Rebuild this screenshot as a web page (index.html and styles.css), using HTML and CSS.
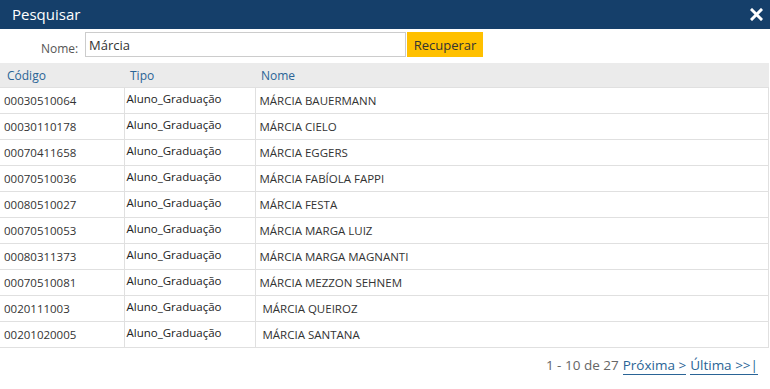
FILE: index.html
```html
<!DOCTYPE html>
<html lang="pt-BR">
<head>
    <meta charset="UTF-8">
    <title>Pesquisar</title>
    <link rel="stylesheet" href="styles.css">
</head>
<body>
    <div class="dialog">
        <div class="titlebar">
            <span class="title">Pesquisar</span>
            <span class="close">
                <svg width="13" height="13" viewBox="0 0 13 13"><path d="M2 2 L11 11 M11 2 L2 11" stroke="#fff" stroke-width="3" stroke-linecap="square"/></svg>
            </span>
        </div>

        <div class="search-row">
            <label for="nome">Nome:</label>
            <input type="text" id="nome" value="Márcia">
            <button>Recuperar</button>
        </div>

        <table class="results">
            <thead>
                <tr><th class="c-code">Código</th><th class="c-type">Tipo</th><th>Nome</th></tr>
            </thead>
            <tbody>
                <tr><td>00030510064</td><td class="type">Aluno_Graduação</td><td>MÁRCIA BAUERMANN</td></tr>
                <tr><td>00030110178</td><td class="type">Aluno_Graduação</td><td>MÁRCIA CIELO</td></tr>
                <tr><td>00070411658</td><td class="type">Aluno_Graduação</td><td>MÁRCIA EGGERS</td></tr>
                <tr><td>00070510036</td><td class="type">Aluno_Graduação</td><td>MÁRCIA FABÍOLA FAPPI</td></tr>
                <tr><td>00080510027</td><td class="type">Aluno_Graduação</td><td>MÁRCIA FESTA</td></tr>
                <tr><td>00070510053</td><td class="type">Aluno_Graduação</td><td>MÁRCIA MARGA LUIZ</td></tr>
                <tr><td>00080311373</td><td class="type">Aluno_Graduação</td><td>MÁRCIA MARGA MAGNANTI</td></tr>
                <tr><td>00070510081</td><td class="type">Aluno_Graduação</td><td>MÁRCIA MEZZON SEHNEM</td></tr>
                <tr><td>0020111003</td><td class="type">Aluno_Graduação</td><td class="pad">MÁRCIA QUEIROZ</td></tr>
                <tr><td>00201020005</td><td class="type">Aluno_Graduação</td><td class="pad">MÁRCIA SANTANA</td></tr>
            </tbody>
        </table>

        <div class="pager">
            <span class="count">1 - 10 de 27</span>
            <a href="#">Próxima &gt;</a>
            <a href="#">Última &gt;&gt;|</a>
        </div>
    </div>
</body>
</html>
```

FILE: styles.css
```css
body {
    margin: 0;
    font-family: "Open Sans", sans-serif;
    background: #fff;
    color: #333;
}
.dialog {
    width: 770px;
}
.titlebar {
    height: 29px;
    background: #153f6a;
    display: flex;
    align-items: center;
    justify-content: space-between;
    padding: 0 7px 0 12px;
}
.title {
    color: #fff;
    font-size: 15px;
    margin-top: -1px;
}
.close {
    display: flex;
    margin-top: -1px;
}
.search-row {
    display: flex;
    align-items: center;
    height: 25px;
    margin-top: 3px;
    padding-left: 41px;
}
.search-row label {
    font-size: 12px;
    color: #555;
    margin-top: 8px;
    width: 44px;
}
.search-row input {
    width: 321px;
    height: 25px;
    box-sizing: border-box;
    border: 1px solid #ccc;
    padding: 0 3px;
    font-family: "Open Sans", sans-serif;
    font-size: 13px;
    color: #333;
    outline: none;
}
.search-row button {
    margin-left: 1px;
    width: 76px;
    height: 25px;
    border: none;
    background: #ffc000;
    font-family: "Open Sans", sans-serif;
    font-size: 13px;
    color: #333;
    padding: 0;
}
.results {
    width: 769px;
    margin-top: 6px;
    border-collapse: collapse;
    font-size: 11.5px;
}
.results th {
    background: #ebebeb;
    color: #2a6496;
    font-weight: normal;
    text-align: left;
    height: 24px;
    padding: 0 6px;
    font-size: 12px;
}
.results th.c-code {
    width: 112px;
    padding-left: 7px;
    padding-right: 5px;
}
.results th.c-type {
    width: 119px;
}
.results td {
    height: 25px;
    padding: 0 4px;
    border: 1px solid #e0e0e0;
    color: #333;
}
.results td:first-child {
    border-left: none;
}
.results td.type {
    color: #222;
    vertical-align: top;
    padding: 3px 2px 0;
    height: 22px;
}
.results td.pad {
    padding-left: 7px;
}
.pager {
    display: flex;
    justify-content: flex-end;
    gap: 4px;
    padding: 8px 12px 0 0;
    font-size: 13.5px;
}
.pager .count {
    color: #666;
}
.pager a {
    color: #2a6496;
    text-decoration: none;
    border-bottom: 1px solid #2a6496;
}
```
